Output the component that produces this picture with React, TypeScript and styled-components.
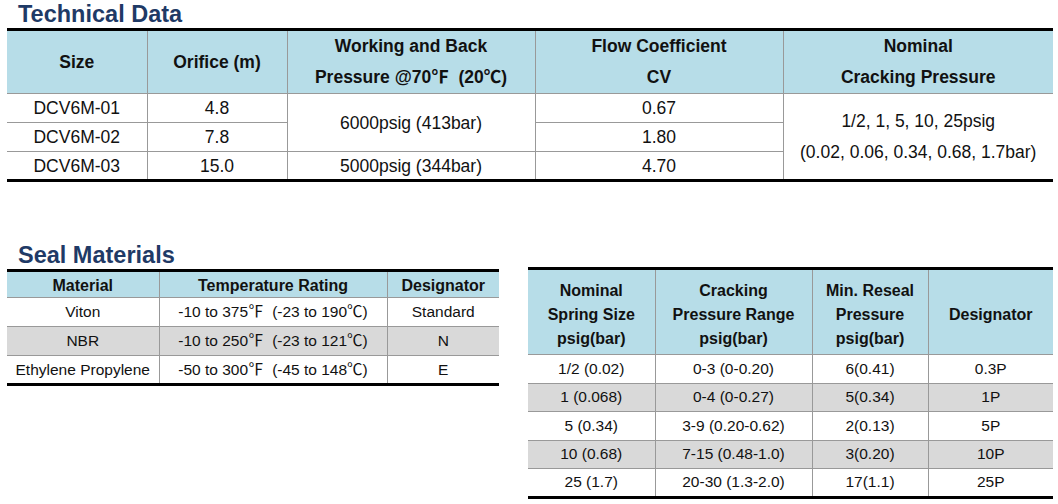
import React from "react";
import styled, { createGlobalStyle } from "styled-components";

const Global = createGlobalStyle`
  html, body { margin: 0; padding: 0; background: #ffffff; }
  body { font-family: "Liberation Sans", Arial, "Noto Sans CJK SC", sans-serif; color: #111; }
`;

const Page = styled.div`
  width: 1058px;
  height: 504px;
  padding: 0 5px 0 7px;
  box-sizing: border-box;
  overflow: hidden;
`;

const Title = styled.h2`
  margin: 0;
  padding-left: 11px;
  height: 28px;
  line-height: 28px;
  font-size: 23.5px;
  font-weight: 700;
  color: #1f3a66;
`;

const Table = styled.table<{ $size: number }>`
  border-collapse: collapse;
  table-layout: fixed;
  width: 100%;
  border-top: 3px solid #000;
  border-bottom: 3px solid #000;
  font-size: ${(p) => p.$size}px;
  text-align: center;
  white-space: pre;
`;

const HeadRow = styled.tr<{ $h: number }>`
  height: ${(p) => p.$h}px;
  background: #b7dde8;
`;

const Row = styled.tr<{ $h: number; $shade?: boolean }>`
  height: ${(p) => p.$h}px;
  background: ${(p) => (p.$shade ? "#d9d9d9" : "#ffffff")};
`;

const Th = styled.th<{ $size: number; $lh: number; $pt?: number }>`
  font-size: ${(p) => p.$size}px;
  line-height: ${(p) => p.$lh}px;
  font-weight: 700;
  padding: ${(p) => p.$pt ?? 0}px 0 0;
  vertical-align: middle;
  border-left: 1px solid #999;
  border-bottom: 1px solid #999;
  &:first-child { border-left: none; }
`;

const Td = styled.td<{ $lh?: number }>`
  padding: 0;
  vertical-align: middle;
  line-height: ${(p) => p.$lh ?? 20}px;
  border-left: 1px solid #999;
  border-top: 1px solid #999;
  &:first-child { border-left: none; }
`;

const Lower = styled.div`
  display: flex;
  align-items: flex-start;
  gap: 29px;
  margin-top: 59px;
`;

const LeftCol = styled.div`
  width: 492px;
  flex: none;
`;

const RightCol = styled.div`
  width: 525px;
  flex: none;
  padding-top: 26px;
`;

const techRows = [
  { size: "DCV6M-01", orifice: "4.8", cv: "0.67" },
  { size: "DCV6M-02", orifice: "7.8", cv: "1.80" },
  { size: "DCV6M-03", orifice: "15.0", cv: "4.70" },
];

const seals = [
  { m: "Viton", t: "-10 to 375℉  (-23 to 190℃)", d: "Standard" },
  { m: "NBR", t: "-10 to 250℉  (-23 to 121℃)", d: "N" },
  { m: "Ethylene Propylene", t: "-50 to 300℉  (-45 to 148℃)", d: "E" },
];

const springs = [
  ["1/2 (0.02)", "0-3 (0-0.20)", "6(0.41)", "0.3P"],
  ["1 (0.068)", "0-4 (0-0.27)", "5(0.34)", "1P"],
  ["5 (0.34)", "3-9 (0.20-0.62)", "2(0.13)", "5P"],
  ["10 (0.68)", "7-15 (0.48-1.0)", "3(0.20)", "10P"],
  ["25 (1.7)", "20-30 (1.3-2.0)", "17(1.1)", "25P"],
];

export default function App() {
  return (
    <Page>
      <Global />
      <Title>Technical Data</Title>
      <Table $size={17.5}>
        <colgroup>
          <col style={{ width: 140 }} />
          <col style={{ width: 140 }} />
          <col style={{ width: 248 }} />
          <col style={{ width: 248 }} />
          <col style={{ width: 270 }} />
        </colgroup>
        <thead>
          <HeadRow $h={62}>
            <Th $size={17.5} $lh={31}>Size</Th>
            <Th $size={17.5} $lh={31}>Orifice (m)</Th>
            <Th $size={17.5} $lh={31}>{"Working and Back\nPressure @70℉  (20℃)"}</Th>
            <Th $size={17.5} $lh={31}>{"Flow Coefficient\nCV"}</Th>
            <Th $size={17.5} $lh={31}>{"Nominal\nCracking Pressure"}</Th>
          </HeadRow>
        </thead>
        <tbody>
          {techRows.map((r, i) => (
            <Row key={r.size} $h={29}>
              <Td>{r.size}</Td>
              <Td>{r.orifice}</Td>
              {i === 0 && <Td rowSpan={2}>6000psig (413bar)</Td>}
              {i === 2 && <Td>5000psig (344bar)</Td>}
              <Td>{r.cv}</Td>
              {i === 0 && (
                <Td rowSpan={3} $lh={31}>
                  {"1/2, 1, 5, 10, 25psig\n(0.02, 0.06, 0.34, 0.68, 1.7bar)"}
                </Td>
              )}
            </Row>
          ))}
        </tbody>
      </Table>

      <Lower>
        <LeftCol>
          <Title>Seal Materials</Title>
          <Table $size={15.5}>
            <colgroup>
              <col style={{ width: 152 }} />
              <col style={{ width: 228 }} />
              <col style={{ width: 112 }} />
            </colgroup>
            <thead>
              <HeadRow $h={27}>
                <Th $size={16} $lh={20} $pt={3}>Material</Th>
                <Th $size={16} $lh={20} $pt={3}>Temperature Rating</Th>
                <Th $size={16} $lh={20} $pt={3}>Designator</Th>
              </HeadRow>
            </thead>
            <tbody>
              {seals.map((s, i) => (
                <Row key={s.m} $h={29} $shade={i === 1}>
                  <Td>{s.m}</Td>
                  <Td>{s.t}</Td>
                  <Td>{s.d}</Td>
                </Row>
              ))}
            </tbody>
          </Table>
        </LeftCol>

        <RightCol>
          <Table $size={15.5}>
            <colgroup>
              <col style={{ width: 127 }} />
              <col style={{ width: 157 }} />
              <col style={{ width: 116 }} />
              <col style={{ width: 125 }} />
            </colgroup>
            <thead>
              <HeadRow $h={86}>
                <Th $size={16} $lh={24} $pt={5}>{"Nominal\nSpring Size\npsig(bar)"}</Th>
                <Th $size={16} $lh={24} $pt={5}>{"Cracking\nPressure Range\npsig(bar)"}</Th>
                <Th $size={16} $lh={24} $pt={5}>{"Min. Reseal\nPressure\npsig(bar)"}</Th>
                <Th $size={16} $lh={24} $pt={5}>Designator</Th>
              </HeadRow>
            </thead>
            <tbody>
              {springs.map((r, i) => (
                <Row key={r[3]} $h={28.5} $shade={i % 2 === 1}>
                  {r.map((c, j) => (
                    <Td key={j}>{c}</Td>
                  ))}
                </Row>
              ))}
            </tbody>
          </Table>
        </RightCol>
      </Lower>
    </Page>
  );
}
